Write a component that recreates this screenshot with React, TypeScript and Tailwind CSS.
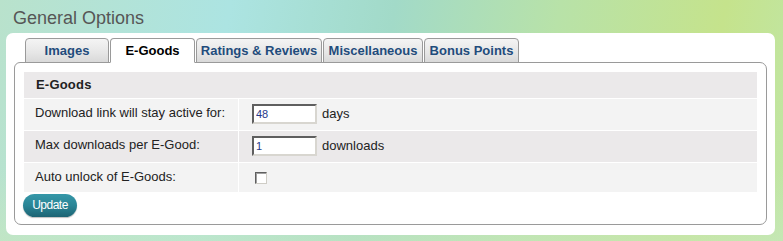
import React from "react";

const tabs = [
  { label: "Images", w: "w-[84px]" },
  { label: "E-Goods", w: "w-[85px]", active: true },
  { label: "Ratings & Reviews", w: "w-[126px]" },
  { label: "Miscellaneous", w: "w-[100px]" },
  { label: "Bonus Points", w: "w-[95px]" },
];

const inputCls =
  "w-[65px] h-[20px] bg-white border-2 border-t-[#5f5f5f] border-l-[#5f5f5f] border-r-[#d8d6d0] border-b-[#d8d6d0] pl-[2px] text-[11px] text-[#26398a] outline-none";

export default function App() {
  return (
    <div
      className="w-[783px] h-[241px] overflow-hidden bg-[linear-gradient(180deg,rgba(255,255,255,0)_0%,rgba(255,255,255,0)_70%,rgba(200,232,190,0.6)_100%),linear-gradient(100deg,#b9e2cc_0%,#ace4e2_28%,#a2dac8_48%,#b8e2a8_68%,#c5e38c_88%,#c0e6a6_100%)] text-[#222] [font-family:'Liberation_Sans',Arial,sans-serif]"
    >
      <div className="h-[33px] pt-[9px] pl-[13px] text-[18px] leading-[18px] text-[#565656]">
        General Options
      </div>

      <div className="ml-[6px] mr-[8px] h-[202px] bg-white rounded-[7px] pt-[5px] px-[8px]">
        {/* tabs */}
        <div className="flex gap-[1px] pl-[11px] relative z-10 -mb-[1px]">
          {tabs.map((t) => (
            <div
              key={t.label}
              className={
                t.active
                  ? `${t.w} h-[25px] flex items-center justify-center border border-[#9a9a9a] border-b-white rounded-t-[4px] bg-white text-[13px] font-bold text-black`
                  : `${t.w} h-[25px] flex items-center justify-center border border-[#9a9a9a] rounded-t-[4px] bg-[linear-gradient(180deg,#f4f4f4_0%,#e6e6e6_60%,#d9d9d9_100%)] text-[13px] font-bold text-[#1f4c7c]`
              }
            >
              {t.label}
            </div>
          ))}
        </div>

        {/* box */}
        <div className="h-[163px] border border-[#9a9a9a] rounded-[7px] rounded-tl-[6px] pt-[9px] px-[9px]">
          <div className="flex flex-col gap-[1px] bg-white">
            <div className="h-[26px] bg-[#ebe9ea] pl-[12px] pt-[5px] text-[13px] leading-[15px] font-bold tracking-[0.2px]">
              E-Goods
            </div>

            <div className="flex h-[31px] gap-[1px]">
              <div className="w-[214px] bg-[#f3f3f3] pl-[11px] pt-[6px] text-[13px] leading-[15px]">
                Download link will stay active for:
              </div>
              <div className="flex-1 bg-[#f3f3f3] flex items-start pl-[13px] pt-[5px]">
                <input className={inputCls} defaultValue="48" />
                <span className="ml-[5px] pt-[2px] text-[13px] leading-[15px]">days</span>
              </div>
            </div>

            <div className="flex h-[31px] gap-[1px]">
              <div className="w-[214px] bg-[#ebe9ea] pl-[11px] pt-[6px] text-[13px] leading-[15px]">
                Max downloads per E-Good:
              </div>
              <div className="flex-1 bg-[#ebe9ea] flex items-start pl-[13px] pt-[5px]">
                <input className={inputCls} defaultValue="1" />
                <span className="ml-[5px] pt-[2px] text-[13px] leading-[15px]">downloads</span>
              </div>
            </div>

            <div className="flex h-[29px] gap-[1px]">
              <div className="w-[214px] bg-[#f3f3f3] pl-[11px] pt-[6px] text-[13px] leading-[15px]">
                Auto unlock of E-Goods:
              </div>
              <div className="flex-1 bg-[#f3f3f3] pl-[16px] pt-[9px]">
                <div className="w-[12px] h-[12px] bg-white border border-t-[#5f5f5f] border-l-[#5f5f5f] border-r-[#cfcdc6] border-b-[#cfcdc6] shadow-[inset_1px_1px_0_#a0a0a0]" />
              </div>
            </div>
          </div>

          <button className="mt-[1px] -ml-[1px] w-[54px] h-[23px] rounded-full bg-[linear-gradient(180deg,#3597a8_0%,#2a8596_50%,#1d6474_100%)] text-white text-[12px] tracking-[-0.5px] leading-none shadow-[0_1px_1px_rgba(0,0,0,0.25)]">
            Update
          </button>
        </div>
      </div>
    </div>
  );
}
